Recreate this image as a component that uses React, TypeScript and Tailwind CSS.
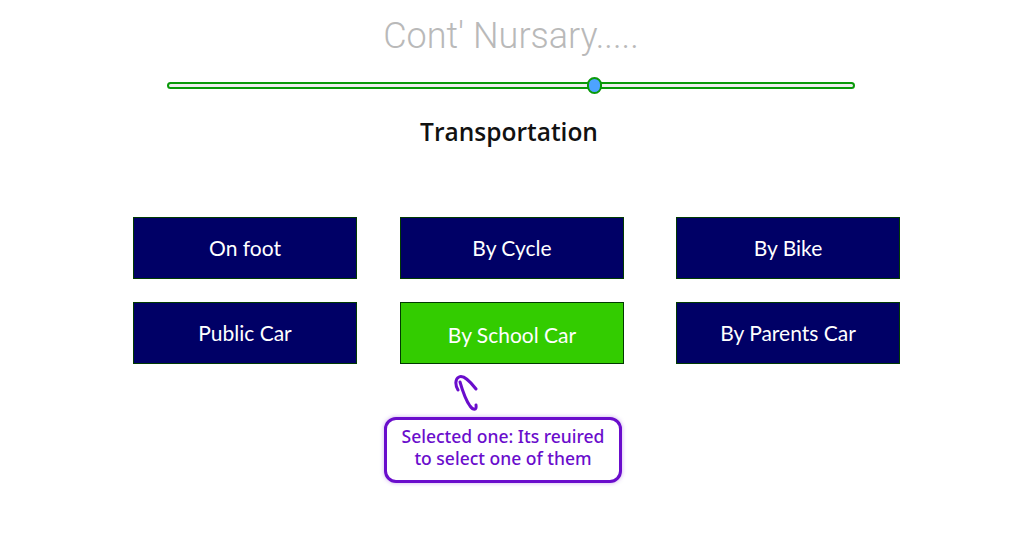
import React, { useState } from 'react';

const options = ['On foot', 'By Cycle', 'By Bike', 'Public Car', 'By School Car', 'By Parents Car'];

export default function App() {
  const [selected, setSelected] = useState('By School Car');

  return (
    <div className="w-[1028px] h-[545px] bg-white overflow-hidden flex flex-col items-center">
      <h1 className="mt-[14px] h-[44px] leading-[44px] text-[36px] font-light text-[#b9b9b9] font-['Roboto',sans-serif] ml-[-6px]">
        Cont' Nursary.....
      </h1>

      {/* progress slider */}
      <div className="mt-[24px] ml-[-7px] relative w-[688px] h-[7px] rounded-full border-2 border-[#0a9a0a] bg-[#eeeeee]">
        <div className="absolute left-[418px] top-[-7px] w-[15px] h-[17px] rounded-full border-2 border-[#0a9a0a] bg-[#4da3ff]" />
      </div>

      <h2 className="mt-[27px] ml-[-10px] text-[24.5px] leading-[31px] font-semibold text-[#111] font-['Open_Sans',sans-serif]">
        Transportation
      </h2>

      <div className="mt-[70px] ml-[5px] grid grid-cols-[224px_224px_233px] gap-x-[43px] gap-y-[23px]">
        {options.map((opt, idx) => (
          <button
            key={opt}
            onClick={() => setSelected(opt)}
            className={
              'w-[224px] h-[62px] border border-[#013a01] text-white text-[21px] font-["Lato",sans-serif] ' +
              (idx % 3 === 2 ? 'justify-self-end ' : '') +
              (selected === opt ? 'bg-[#33cc00] pt-[3px]' : 'bg-[#000066]')
            }
          >
            {opt}
          </button>
        ))}
      </div>

      <div className="relative w-[240px] ml-[-20px] mt-[9px]">
        <svg width="34" height="42" viewBox="0 0 34 42" className="ml-[66px]" fill="none" stroke="#6a0dcc" strokeWidth="3" strokeLinecap="round" strokeLinejoin="round">
          <path d="M 8 17 C 5 12, 5 6, 9 4 C 13 2, 20 8, 26 16" />
          <path d="M 10 9 C 12 16, 15 26, 20 33 C 23 37, 27 38, 26 32" />
        </svg>
        <div className="mt-[2px] w-[238px] h-[66px] rounded-[12px] border-[3px] border-[#6a0dcc] bg-white shadow-[0_0_4px_rgba(106,13,204,0.35)] flex flex-col items-center justify-center pb-[7px] text-[#6a0dcc] text-[17.5px] leading-[22px] font-medium font-['Noto_Sans',sans-serif]">
          <span>Selected one: Its reuired</span>
          <span>to select one of them</span>
        </div>
      </div>
    </div>
  );
}
